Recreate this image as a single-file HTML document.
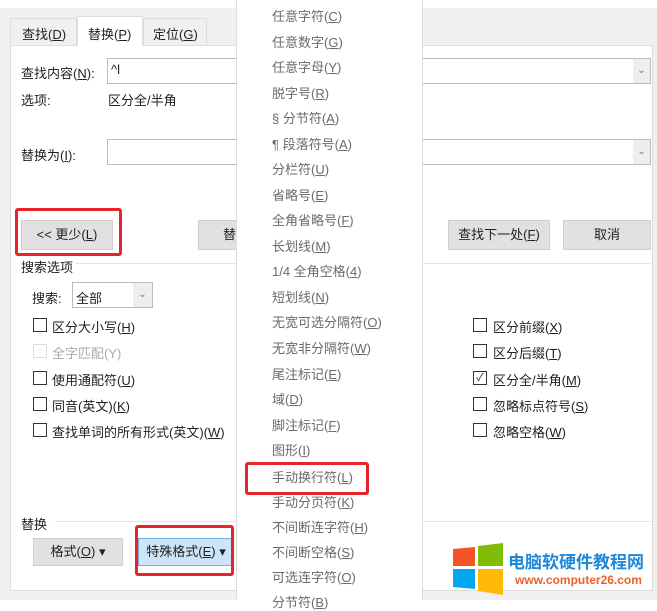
<!DOCTYPE html>
<html><head><meta charset="utf-8"><style>
*{margin:0;padding:0;box-sizing:border-box}
body{width:657px;height:600px;overflow:hidden;background:#fff;position:relative;font-family:"Liberation Sans","Noto Sans CJK SC",sans-serif;font-size:13px;color:#222}
.a{position:absolute;white-space:nowrap}
.btn{position:absolute;background:#e1e1e1;border:1px solid #cfcfcf;text-align:center;font-size:13px}
.cb{position:absolute;width:14px;height:14px;border:1px solid #333;background:#fff}
.red{position:absolute;border:3px solid #e8232a;border-radius:3px}
.mi{position:absolute;left:272px;color:#6a6a6a;font-size:13px;white-space:nowrap;line-height:16px}
u{text-decoration:underline}
</style></head><body>
<div class="a" style="left:0;top:8px;width:657px;height:592px;background:#f0f0f0"></div>
<div class="a" style="left:10px;top:45px;width:643px;height:546px;background:#fff;border:1px solid #ddd"></div>
<div class="a" style="left:10px;top:18px;width:67px;height:27px;background:#f0f0f0;border:1px solid #ddd;border-bottom:none"></div>
<div class="a" style="left:77px;top:16px;width:66px;height:30px;background:#fff;border:1px solid #ddd;border-bottom:none"></div>
<div class="a" style="left:143px;top:18px;width:64px;height:27px;background:#f0f0f0;border:1px solid #ddd;border-bottom:none"></div>
<div class="a" style="left:22px;top:24px">查找(<u>D</u>)</div>
<div class="a" style="left:88px;top:24px">替换(<u>P</u>)</div>
<div class="a" style="left:153px;top:24px">定位(<u>G</u>)</div>

<div class="a" style="left:21px;top:63px">查找内容(<u>N</u>):</div>
<div class="a" style="left:107px;top:58px;width:544px;height:26px;border:1px solid #bbb;background:#fff"></div>
<div class="a" style="left:633px;top:59px;width:17px;height:24px;background:#eee;color:#777;font-size:10px;text-align:center;line-height:24px">⌄</div>
<div class="a" style="left:111px;top:62px">^l</div>
<div class="a" style="left:21px;top:90px">选项:</div>
<div class="a" style="left:108px;top:90px">区分全/半角</div>
<div class="a" style="left:21px;top:145px">替换为(<u>I</u>):</div>
<div class="a" style="left:107px;top:139px;width:544px;height:26px;border:1px solid #bbb;background:#fff"></div>
<div class="a" style="left:633px;top:140px;width:17px;height:24px;background:#eee;color:#777;font-size:10px;text-align:center;line-height:24px">⌄</div>

<div class="btn" style="left:21px;top:220px;width:92px;height:30px;line-height:28px">&lt;&lt; 更少(<u>L</u>)</div>
<div class="red" style="left:15px;top:208px;width:107px;height:48px"></div>
<div class="btn" style="left:198px;top:220px;width:110px;height:30px;line-height:28px;text-align:left;padding-left:24px">替</div>
<div class="btn" style="left:448px;top:220px;width:102px;height:30px;line-height:28px">查找下一处(<u>F</u>)</div>
<div class="btn" style="left:563px;top:220px;width:88px;height:30px;line-height:28px">取消</div>

<div class="a" style="left:75px;top:263px;width:576px;height:1px;background:#e3e3e3"></div>
<div class="a" style="left:21px;top:257px">搜索选项</div>
<div class="a" style="left:32px;top:288px">搜索:</div>
<div class="a" style="left:72px;top:282px;width:81px;height:26px;border:1px solid #bbb;background:#fff"></div>
<div class="a" style="left:133px;top:283px;width:19px;height:24px;background:#eee;color:#777;font-size:10px;text-align:center;line-height:24px">⌄</div>
<div class="a" style="left:76px;top:288px">全部</div>

<div class="cb" style="left:33px;top:318px"></div><div class="a" style="left:52px;top:317px">区分大小写(<u>H</u>)</div>
<div class="cb" style="left:33px;top:344px;border-color:#ddd"></div><div class="a" style="left:52px;top:343px;color:#aaa">全字匹配(Y)</div>
<div class="cb" style="left:33px;top:371px"></div><div class="a" style="left:52px;top:370px">使用通配符(<u>U</u>)</div>
<div class="cb" style="left:33px;top:397px"></div><div class="a" style="left:52px;top:396px">同音(英文)(<u>K</u>)</div>
<div class="cb" style="left:33px;top:423px"></div><div class="a" style="left:52px;top:422px">查找单词的所有形式(英文)(<u>W</u>)</div>

<div class="cb" style="left:473px;top:318px"></div><div class="a" style="left:493px;top:317px">区分前缀(<u>X</u>)</div>
<div class="cb" style="left:473px;top:344px"></div><div class="a" style="left:493px;top:343px">区分后缀(<u>T</u>)</div>
<div class="cb" style="left:473px;top:371px;font-size:11px;line-height:12px;text-align:center;color:#333">✓</div><div class="a" style="left:493px;top:370px">区分全/半角(<u>M</u>)</div>
<div class="cb" style="left:473px;top:397px"></div><div class="a" style="left:493px;top:396px">忽略标点符号(<u>S</u>)</div>
<div class="cb" style="left:473px;top:423px"></div><div class="a" style="left:493px;top:422px">忽略空格(<u>W</u>)</div>

<div class="a" style="left:55px;top:521px;width:596px;height:1px;background:#e3e3e3"></div>
<div class="a" style="left:21px;top:514px">替换</div>
<div class="btn" style="left:33px;top:538px;width:90px;height:28px;line-height:26px">格式(<u>O</u>) ▾</div>
<div class="btn" style="left:138px;top:538px;width:96px;height:28px;line-height:26px;background:#cce4f7;border-color:#7ab0de">特殊格式(<u>E</u>) ▾</div>
<div class="red" style="left:135px;top:525px;width:99px;height:51px"></div>

<div class="a" style="left:236px;top:0;width:187px;height:600px;background:#fff;border-left:1px solid #ddd;border-right:1px solid #ddd"></div>
<div class="mi" style="top:9px">任意字符(<u>C</u>)</div>
<div class="mi" style="top:35px">任意数字(<u>G</u>)</div>
<div class="mi" style="top:60px">任意字母(<u>Y</u>)</div>
<div class="mi" style="top:86px">脱字号(<u>R</u>)</div>
<div class="mi" style="top:111px">§ 分节符(<u>A</u>)</div>
<div class="mi" style="top:137px">¶ 段落符号(<u>A</u>)</div>
<div class="mi" style="top:162px">分栏符(<u>U</u>)</div>
<div class="mi" style="top:188px">省略号(<u>E</u>)</div>
<div class="mi" style="top:213px">全角省略号(<u>F</u>)</div>
<div class="mi" style="top:239px">长划线(<u>M</u>)</div>
<div class="mi" style="top:264px">1/4 全角空格(<u>4</u>)</div>
<div class="mi" style="top:290px">短划线(<u>N</u>)</div>
<div class="mi" style="top:315px">无宽可选分隔符(<u>O</u>)</div>
<div class="mi" style="top:341px">无宽非分隔符(<u>W</u>)</div>
<div class="mi" style="top:367px">尾注标记(<u>E</u>)</div>
<div class="mi" style="top:392px">域(<u>D</u>)</div>
<div class="mi" style="top:418px">脚注标记(<u>F</u>)</div>
<div class="mi" style="top:443px">图形(<u>I</u>)</div>
<div class="mi" style="top:470px">手动换行符(<u>L</u>)</div>
<div class="mi" style="top:495px">手动分页符(<u>K</u>)</div>
<div class="mi" style="top:520px">不间断连字符(<u>H</u>)</div>
<div class="mi" style="top:545px">不间断空格(<u>S</u>)</div>
<div class="mi" style="top:570px">可选连字符(<u>O</u>)</div>
<div class="mi" style="top:595px">分节符(<u>B</u>)</div>
<div class="red" style="left:245px;top:462px;width:124px;height:33px"></div>

<svg class="a" style="left:453px;top:543px" width="52" height="52" viewBox="0 0 52 52">
<path d="M0 6 L22 4 L22 23 L0 23Z" fill="#f35325"/>
<path d="M25 3 L50 0 L50 23 L25 23Z" fill="#81bc06"/>
<path d="M0 26 L22 26 L22 46 L0 44Z" fill="#05a6f0"/>
<path d="M25 26 L50 26 L50 52 L25 48Z" fill="#ffba08"/>
</svg>
<div class="a" style="left:508px;top:548px;color:#1e88d8;font-size:17px;font-weight:bold">电脑软硬件教程网</div>
<div class="a" style="left:515px;top:573px;color:#e8632a;font-size:12px;font-weight:bold">www.computer26.com</div>
</body></html>
